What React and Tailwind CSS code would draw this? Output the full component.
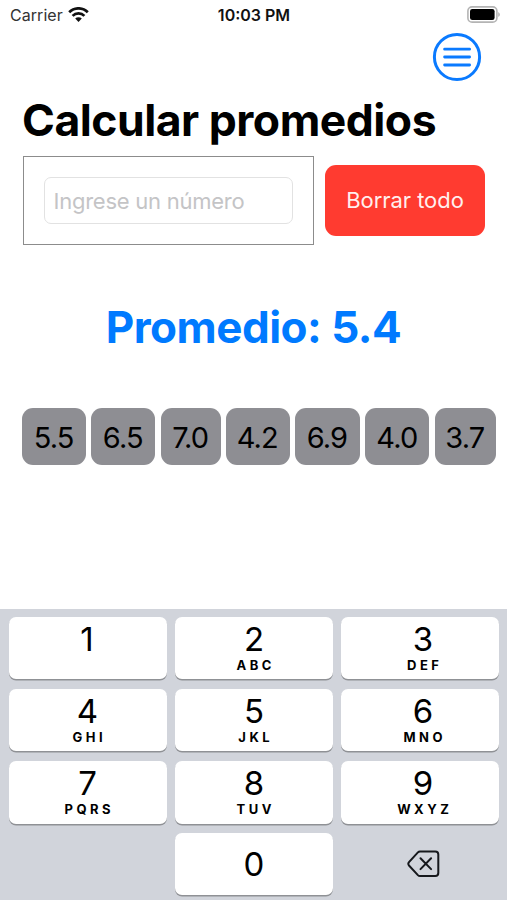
const grades = [
  { value: '5.5', width: 'w-[63.5px]' },
  { value: '6.5', width: 'w-[64px]' },
  { value: '7.0', width: 'w-[60px]' },
  { value: '4.2', width: 'w-[63.5px]' },
  { value: '6.9', width: 'w-[65px]' },
  { value: '4.0', width: 'w-[64px]' },
  { value: '3.7', width: 'w-[61px]' },
];

const keys = [
  { digit: '1', letters: '', inset: 'pr-[2px]' },
  { digit: '2', letters: 'ABC', inset: 'px-0' },
  { digit: '3', letters: 'DEF', inset: 'pl-[6px]' },
  { digit: '4', letters: 'GHI', inset: 'pr-[1px]' },
  { digit: '5', letters: 'JKL', inset: 'px-0' },
  { digit: '6', letters: 'MNO', inset: 'pl-[6px]' },
  { digit: '7', letters: 'PQRS', inset: 'pr-[1px]' },
  { digit: '8', letters: 'TUV', inset: 'px-0' },
  { digit: '9', letters: 'WXYZ', inset: 'pl-[6px]' },
];

function WifiIcon() {
  return (
    <svg width="21" height="16" viewBox="0 0 21 16" fill="none" stroke="#111" strokeWidth="2.7">
      <path d="M1.2 5.2a13.1 13.1 0 0 1 18.6 0" />
      <path d="M4.6 8.9a8.3 8.3 0 0 1 11.8 0" />
      <path d="M7.2 11.6a4.7 4.7 0 0 1 6.6 0L10.5 14.9z" fill="#111" stroke="none" />
    </svg>
  );
}

function BatteryIcon() {
  return (
    <svg width="34" height="17" viewBox="0 0 34 17">
      <rect x="0.9" y="0.9" width="29" height="15.2" rx="4.2" fill="#fff" stroke="#b4b4b4" strokeWidth="1.6" />
      <rect x="3" y="3" width="24.6" height="11" rx="2.3" fill="#000" />
      <path d="M31.3 6.2c1.9.6 1.9 4 0 4.6z" fill="#a8a8a8" />
    </svg>
  );
}

function StatusBar() {
  return (
    <header className="grid h-[29px] grid-cols-3 items-center pl-[10px] pr-[6px] text-[#111]">
      <div className="flex items-center gap-[5px]">
        <span className="text-[16px] leading-none tracking-[0.05px] text-[#333]">Carrier</span>
        <WifiIcon />
      </div>
      <span className="whitespace-nowrap pr-[3px] text-center text-[16px] font-semibold leading-none">10:03 PM</span>
      <div className="flex justify-end">
        <BatteryIcon />
      </div>
    </header>
  );
}

function MenuButton() {
  return (
    <button type="button" aria-label="Menu" className="size-[50px]">
      <svg width="50" height="50" viewBox="0 0 50 50" fill="none" stroke="#0a7aff" strokeLinecap="round">
        <circle cx="25" cy="25" r="22.6" strokeWidth="3" />
        <path d="M12.6 17.2h25M12.6 25h25M12.6 33h25" strokeWidth="2.8" />
      </svg>
    </button>
  );
}

function Key({ digit, letters, inset }) {
  return (
    <button type="button" className={`flex h-[62.5px] flex-col items-center rounded-[7px] bg-white pt-[4px] text-black shadow-[0_1.5px_0_#8f9195] ${inset}`}>
      <span className="text-[33px] leading-[36px]">{digit}</span>
      <span className="-mr-[3.5px] text-[13px] font-bold leading-[16px] tracking-[3.5px]">{letters}</span>
    </button>
  );
}

function Keypad() {
  return (
    <div className="h-[291px] bg-[#d1d4db] pl-[9px] pr-[8px] pt-[7.6px]">
      <div className="grid grid-cols-3 gap-x-[8px] gap-y-[9.8px]">
        {keys.map((key) => (
          <Key key={key.digit} digit={key.digit} letters={key.letters} inset={key.inset} />
        ))}
        <div />
        <button type="button" className="flex h-[62px] items-center justify-center rounded-[7px] bg-white text-[33px] leading-none text-black shadow-[0_1.5px_0_#8f9195]">
          0
        </button>
        <button type="button" aria-label="Borrar" className="flex h-[62px] items-center justify-center pb-[1px] pl-[7px]">
          <svg width="33" height="28" viewBox="0 0 33 28" fill="none" stroke="#16181c" strokeWidth="2" strokeLinecap="round" strokeLinejoin="round">
            <path d="M13 1.5H28.3a3 3 0 0 1 3 3V23a3 3 0 0 1-3 3H13a3 3 0 0 1-2.1-.9L2.2 15.8a3 3 0 0 1 0-4L10.9 2.4a3 3 0 0 1 2.1-.9Z" />
            <path d="M13.5 8.3l10.6 10.8M24.1 8.3L13.5 19.1" />
          </svg>
        </button>
      </div>
    </div>
  );
}

export default function App() {
  return (
    <div className="flex h-[900px] w-[507px] flex-col overflow-hidden bg-white font-[Inter,sans-serif]">
      <StatusBar />
      <main className="flex-1">
        <div className="flex h-[61px] justify-end pr-[25px] pt-[3px]">
          <MenuButton />
        </div>
        <h1 className="whitespace-nowrap pl-[22px] text-[44.5px] font-bold leading-[60px] tracking-[-0.5px] text-black">
          Calcular promedios
        </h1>

        <div className="mt-[6px] flex items-center pl-[22.5px]">
          <div className="flex h-[89px] w-[291.5px] items-center border border-[#8c8c8c] px-[20px]">
            <input
              type="text"
              placeholder="Ingrese un número"
              className="h-[47px] w-full rounded-[7px] border border-[#e2e2e2] px-[9px] text-[22px] tracking-[-0.25px] outline-none placeholder:text-[#c4c4c6]"
            />
          </div>
          <button type="button" className="ml-[11px] h-[71px] w-[160px] rounded-[11px] bg-[#ff3b30] text-[22px] tracking-[-0.05px] text-[#ffefee]">
            Borrar todo
          </button>
        </div>

        <h2 className="mt-[52px] whitespace-nowrap text-center text-[44px] font-bold leading-[60px] tracking-[-0.5px] text-[#007aff]">
          Promedio: 5.4
        </h2>

        <div className="mt-[51px] flex gap-[5.4px] pl-[22.4px]">
          {grades.map((grade) => (
            <div key={grade.value} className={`flex h-[57px] shrink-0 items-center justify-center rounded-[11px] bg-[#8e8e93] pr-px pt-[2px] text-[29px] tracking-[-0.9px] text-black ${grade.width}`}>
              {grade.value}
            </div>
          ))}
        </div>
      </main>
      <Keypad />
    </div>
  );
}
